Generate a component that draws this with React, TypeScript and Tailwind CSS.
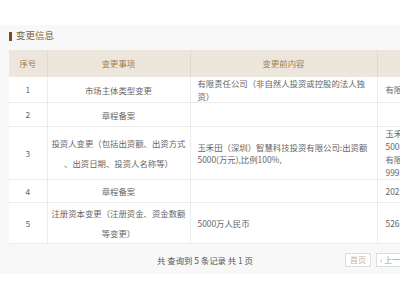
import React from 'react';

type Row = {
  no: number;
  item: string[];
  before: string[];
  after: string[];
  h: string;
};

const rows: Row[] = [
  {
    no: 1,
    item: ['市场主体类型变更'],
    before: ['有限责任公司（非自然人投资或控股的法人独', '资）'],
    after: ['有限责任公司（自然人投资或控股）'],
    h: 'h-[24px]',
  },
  {
    no: 2,
    item: ['章程备案'],
    before: [],
    after: [],
    h: 'h-[24px]',
  },
  {
    no: 3,
    item: ['投资人变更（包括出资额、出资方式', '、出资日期、投资人名称等）'],
    before: ['玉禾田（深圳）智慧科技投资有限公司:出资额', '5000(万元),比例100%,'],
    after: ['玉禾田（深圳）智慧科技投资', '5000(万元),比例0.01%;', '有限公司:出资额', '9995(万元),比例99.99%,'],
    h: 'h-[52px]',
  },
  {
    no: 4,
    item: ['章程备案'],
    before: [],
    after: ['2023年12月修订章程'],
    h: 'h-[23px]',
  },
  {
    no: 5,
    item: ['注册资本变更（注册资金、资金数额', '等变更）'],
    before: ['5000万人民币'],
    after: ['52631.5789万人民币'],
    h: 'h-[40px]',
  },
];

const App: React.FC = () => {
  return (
    <div
      className="w-[400px] h-[300px] overflow-hidden bg-white text-[#666]"
      style={{ fontFamily: '"Noto Sans CJK SC", "Noto Sans", sans-serif' }}
    >
      <div className="w-[540px] mt-[25px] h-[249px] bg-[#f8f8f8] pt-[5px]">
        {/* Title */}
        <div className="flex items-center h-[12px] pl-[9px]">
          <span className="w-[3px] h-[9px] bg-[#7a4a1c]" />
          <span className="ml-[4px] text-[9.5px] leading-none text-[#7b6443]">变更信息</span>
        </div>

        {/* Table */}
        <table className="ml-[9px] mt-[8px] table-fixed border-collapse w-[520px] bg-white text-[8.4px]">
          <colgroup>
            <col className="w-[38px]" />
            <col className="w-[143px]" />
            <col className="w-[187px]" />
            <col className="w-[152px]" />
          </colgroup>
          <thead>
            <tr className="h-[27px] bg-[#ece6dc] text-[#a47d45]">
              <th className="font-normal border-r border-[#e2dace]">序号</th>
              <th className="font-normal border-r border-[#e2dace]">变更事项</th>
              <th className="font-normal border-r border-[#e2dace]">变更前内容</th>
              <th className="font-normal">变更后内容</th>
            </tr>
          </thead>
          <tbody>
            {rows.map((r) => (
              <tr key={r.no} className={`${r.h} border-b border-[#ececec]`}>
                <td className="text-center border-r border-[#ececec] p-0">{r.no}</td>
                <td className="text-center border-r border-[#ececec] p-0 leading-[20px]">
                  {r.item.map((l, i) => (
                    <div key={i}>{l}</div>
                  ))}
                </td>
                <td className="border-r border-[#ececec] py-0 pl-[7px] pr-[4px] leading-[12.5px]">
                  {r.before.map((l, i) => (
                    <div key={i} className="whitespace-nowrap">{l}</div>
                  ))}
                </td>
                <td className="py-0 pl-[8px] leading-[13px]">
                  {r.after.map((l, i) => (
                    <div key={i} className="whitespace-nowrap">{l}</div>
                  ))}
                </td>
              </tr>
            ))}
          </tbody>
        </table>

        {/* Footer */}
        <div className="flex items-center mt-[9px] h-[14px]">
          <span className="ml-[157px] w-[88px] text-[8.4px] text-[#555] whitespace-nowrap">
            共 查询到 5 条记录 共 1 页
          </span>
          <button className="ml-[100px] w-[26px] h-[14px] border border-[#ddd] bg-white text-[8px] leading-none text-[#c8b48f]">
            首页
          </button>
          <button className="ml-[5px] w-[40px] h-[14px] border border-[#ddd] bg-white text-[8px] leading-none text-[#999] text-left pl-[3px]">
            ‹ 上一页
          </button>
        </div>
      </div>
    </div>
  );
};

export default App;
